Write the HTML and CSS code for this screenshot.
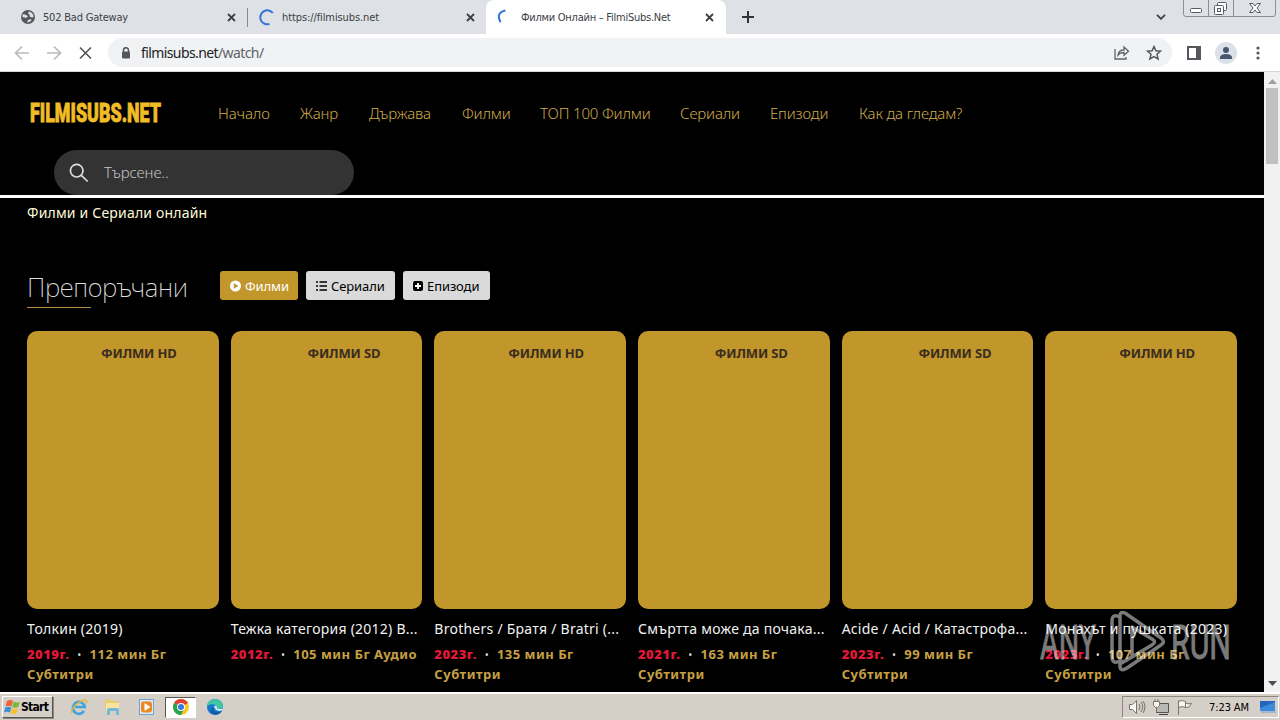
FILE: index.html
```html
<!DOCTYPE html>
<html lang="bg">
<head>
    <meta charset="UTF-8">
    <meta name="viewport" content="width=device-width, initial-scale=1.0">
    <title>Филми Онлайн – FilmiSubs.Net</title>
    <link rel="stylesheet" href="styles.css">
</head>
<body>
    <div class="tab-strip">
        <div class="tab tab-first">
            <svg class="favicon" width="14" height="14" viewBox="0 0 14 14"><circle cx="7" cy="7" r="7" fill="#54585d"/><path d="M1.500 4.500C4 3.500 5 5.500 7 6q-1 2.500-3.500 1.500L1.500 7zM8 1.500q-2 2 .5 3L9 7l3.500.5Q13 3 8 1.500zM6 12.500l1-2.500 3.500-1q0 3-4.500 3.500z" fill="#dee1e6"/></svg>
            <span class="tab-title title-gateway">502 Bad Gateway</span>
            <svg class="close" width="9" height="9" viewBox="0 0 9 9"><path d="M1 1l7 7M8 1L1 8"/></svg>
        </div>
        <div class="tab tab-second">
            <svg class="favicon" width="17" height="17" viewBox="0 0 17 17"><path d="M14.800 4A7 7 0 1 0 11.500 15" fill="none" stroke="#3472dc" stroke-width="2"/></svg>
            <span class="tab-title title-https">https://filmisubs.net</span>
            <svg class="close" width="9" height="9" viewBox="0 0 9 9"><path d="M1 1l7 7M8 1L1 8"/></svg>
        </div>
        <div class="tab tab-active">
            <svg class="favicon" width="17" height="17" viewBox="0 0 17 17"><path d="M10.500 1.500Q.5 3.500 5.500 13.200" fill="none" stroke="#3472dc" stroke-width="2"/></svg>
            <span class="tab-title title-filmi">Филми Онлайн – FilmiSubs.Net</span>
            <svg class="close" width="9" height="9" viewBox="0 0 9 9"><path d="M1 1l7 7M8 1L1 8"/></svg>
        </div>
        <svg class="new-tab" width="12" height="12" viewBox="0 0 12 12"><path d="M6 0v12M0 6h12" stroke="#2f3237" stroke-width="2"/></svg>
        <svg class="tab-search" width="10" height="6" viewBox="0 0 10 6"><path d="M1 .8l4 4 4-4" fill="none" stroke="#3c4043" stroke-width="1.800"/></svg>
        <svg class="window-buttons" width="94" height="18" viewBox="0 0 94 18">
            <path d="M.5 0v14q0 2.500 2.500 2.500h87q2.500 0 2.500-2.500V0M25.500 0v16M50.500 0v16" fill="none" stroke="#8b9098"/>
            <g fill="#fff" stroke="#555b65">
                <rect x="7.500" y="8.500" width="11" height="4" rx="1"/>
                <rect x="34.500" y="2.500" width="9" height="8" rx="1"/>
                <rect x="31.500" y="5.500" width="9" height="9" rx="1"/>
                <rect x="34.500" y="8.500" width="3" height="3"/>
                <path d="M66.500 3.500h3.500l2 2.500 2-2.500h3.500L74 8l3.500 4.500H74l-2-2.500-2 2.500h-3.500L70 8z"/>
            </g>
        </svg>
    </div>

    <div class="toolbar">
        <svg class="nav-icons" width="80" height="16" viewBox="0 0 80 16" fill="none" stroke-width="1.700">
            <path d="M15 8H2M8 1.500L1.500 8 8 14.500M33 8h13M40 1.500L46.500 8 40 14.500" stroke="#b9bbbe"/>
            <path d="M66 2.500L77 13.500M77 2.500L66 13.500" stroke="#54585d"/>
        </svg>
        <div class="address">
            <svg width="10" height="12" viewBox="0 0 10 12"><path d="M2.500 5V3.200a2.500 2.500 0 0 1 5 0V5" fill="none" stroke="#54585d" stroke-width="1.500"/><rect x="1" y="4.500" width="8" height="7" rx="1" fill="#54585d"/></svg>
            <span class="url">filmisubs.net<i>/watch/</i></span>
            <svg class="share" width="16" height="15" viewBox="0 0 16 15" fill="none" stroke="#5f6368" stroke-width="1.300"><path d="M1 4v10h11v-2M4 10c.5-4 2.500-5 6-5V2l4.500 4.300L10 10.300V7.500C7.500 7.500 5.500 8 4 10z"/></svg>
            <svg class="star" width="16" height="16" viewBox="0 0 16 16"><path d="M8 1.500l1.900 4.300 4.600.4L11 9.300l1.100 4.600L8 11.500l-4.100 2.400L5 9.300 1.500 6.200l4.600-.4z" fill="none" stroke="#54585d" stroke-width="1.500"/></svg>
        </div>
        <svg class="side-panel" width="14" height="14" viewBox="0 0 14 14"><path d="M1 1h12v12H1z" fill="#fff" stroke="#54585d" stroke-width="2"/><path d="M9 0h5v14H9z" fill="#54585d"/></svg>
        <svg class="profile" width="22" height="22" viewBox="0 0 22 22"><circle cx="11" cy="11" r="11" fill="#dce1e8"/><circle cx="11" cy="8" r="3" fill="#48566f"/><path d="M5 17v-2q1-3 6-3t6 3v2z" fill="#48566f"/></svg>
        <svg class="dots" width="4" height="14" viewBox="0 0 4 14" fill="#54585d"><circle cx="2" cy="2" r="1.600"/><circle cx="2" cy="7" r="1.600"/><circle cx="2" cy="12" r="1.600"/></svg>
    </div>

    <div class="viewport">
        <main>
            <header>
                <div class="menu-row">
                    <svg class="logo" width="134" height="36" viewBox="0 0 134 36"><text x="1" y="27" textLength="131" lengthAdjust="spacingAndGlyphs">FILMISUBS.NET</text></svg>
                    <nav>
                        <a>Начало</a>
                        <a>Жанр</a>
                        <a>Държава</a>
                        <a>Филми</a>
                        <a>ТОП 100 Филми</a>
                        <a>Сериали</a>
                        <a>Епизоди</a>
                        <a>Как да гледам?</a>
                    </nav>
                </div>
                <div class="search">
                    <svg width="20" height="20" viewBox="0 0 20 20" fill="none" stroke="#ddd" stroke-width="1.700"><circle cx="7.700" cy="7.700" r="6.300"/><path d="M12.300 12.300l6.500 6.200"/></svg>
                    <span>Търсене..</span>
                </div>
            </header>
            <p class="tagline">Филми и Сериали онлайн</p>
            <section class="heading">
                <h2>Препоръчани</h2>
                <div class="filters">
                    <a class="filter active"><svg width="12" height="12" viewBox="0 0 12 12"><circle cx="6.500" cy="6" r="5.500" fill="#fff"/><path d="M4.800 3.200v5.600L9.500 6z" fill="#c1962a"/></svg><span>Филми</span></a>
                    <a class="filter"><svg width="12" height="12" viewBox="0 0 12 12"><path d="M1 2h2M4.500 2H12M1 6h2M4.500 6H12M1 10h2M4.500 10H12" stroke="#000" stroke-width="1.700"/></svg><span>Сериали</span></a>
                    <a class="filter"><svg width="12" height="12" viewBox="0 0 12 12"><rect x="1" y="1" width="10" height="10" rx="2"/><path d="M6 3v6M3 6h6" stroke="#fff" stroke-width="1.800"/></svg><span>Епизоди</span></a>
                </div>
            </section>
            <section class="movies">
                <article>
                    <div class="poster"><span>ФИЛМИ HD</span></div>
                    <h3>Толкин (2019)</h3>
                    <p class="meta"><b>2019г.</b><i>•</i>112 мин Бг<br>Субтитри</p>
                </article>
                <article>
                    <div class="poster"><span>ФИЛМИ SD</span></div>
                    <h3>Тежка категория (2012) В...</h3>
                    <p class="meta"><b>2012г.</b><i>•</i>105 мин Бг Аудио</p>
                </article>
                <article>
                    <div class="poster"><span>ФИЛМИ HD</span></div>
                    <h3>Brothers / Братя / Bratri (...</h3>
                    <p class="meta"><b>2023г.</b><i>•</i>135 мин Бг<br>Субтитри</p>
                </article>
                <article>
                    <div class="poster"><span>ФИЛМИ SD</span></div>
                    <h3>Смъртта може да почака...</h3>
                    <p class="meta"><b>2021г.</b><i>•</i>163 мин Бг<br>Субтитри</p>
                </article>
                <article>
                    <div class="poster"><span>ФИЛМИ SD</span></div>
                    <h3>Acide / Acid / Катастрофа...</h3>
                    <p class="meta"><b>2023г.</b><i>•</i>99 мин Бг<br>Субтитри</p>
                </article>
                <article>
                    <div class="poster"><span>ФИЛМИ HD</span></div>
                    <h3>Монахът и пушката (2023)</h3>
                    <p class="meta"><b>2023г.</b><i>•</i>107 мин Бг<br>Субтитри</p>
                </article>
            </section>
        </main>
        <div class="scrollbar">
            <svg width="9" height="5" viewBox="0 0 9 5"><path d="M0 5l4.500-5L9 5z" fill="#a0a0a0"/></svg>
            <div class="thumb"></div>
            <svg class="down" width="9" height="5" viewBox="0 0 9 5"><path d="M0 0h9L4.500 5z" fill="#505050"/></svg>
        </div>
        <svg class="watermark" width="200" height="66" viewBox="0 0 200 66">
            <text x="2" y="51" textLength="56" lengthAdjust="spacingAndGlyphs">ANY</text>
            <path d="M82 9q-8-4-8 4v35q0 9 8 5M94 49l-7 4q-5 2-5-3V8q0-5 5-3l36 25q5 4 0 7L89 60q-6 4-7-1l0-3 32-19q5-3 0-6L94 19v30l8-5" fill="none" stroke="#fff" stroke-width="3.500" stroke-linejoin="round"/>
            <text x="133" y="51" textLength="60" lengthAdjust="spacingAndGlyphs">RUN</text>
        </svg>
    </div>

    <footer class="taskbar">
        <div class="start">
            <svg width="17" height="16" viewBox="0 0 17 16"><path d="M3 2q3-2 6 0L7.500 7.500q-3-1.500-6 0z" fill="#ed6436"/><path d="M9.800 2.500q3 1.700 6 .3L14.200 8q-3 1.600-6 0z" fill="#79b83a"/><path d="M1.300 8.600q3-1.700 6 0L5.900 13.500q-3-1.700-6 0z" fill="#3f8fd7"/><path d="M8 9q3 1.700 6 .2l-1.500 5q-3 1.700-6 0z" fill="#f7c12f"/></svg>
            <span>Start</span>
        </div>
        <div class="launchers">
            <svg width="18" height="18" viewBox="0 0 18 18"><path d="M14 13a6 6 0 1 1 .8-4H5" fill="none" stroke="#42a4dc" stroke-width="2.700"/><path d="M2 15C-.5 11 12 0 16.500 2.500q1 1-.5 3" fill="none" stroke="#e5b83c" stroke-width="1.400"/></svg>
            <svg width="18" height="18" viewBox="0 0 18 18"><path d="M1 2l5-1 1 2h8v9H1z" fill="#e9cb70"/><path d="M2 5h13v8H2z" fill="#f8e6a0"/><path d="M3 17v-5q0-2 2-2h8q2 0 2 2v5h-3v-4H6v4z" fill="#78b7d8"/></svg>
            <svg width="18" height="18" viewBox="0 0 18 18"><rect x="1.500" y="1.500" width="14" height="15" fill="#d9e8f4" stroke="#71a6d1"/><rect x="3" y="3.500" width="11" height="11" rx="3" fill="#ed861d"/><path d="M6.500 5v8l6-4z" fill="#fff"/></svg>
            <div class="running"><svg width="16" height="16" viewBox="0 0 16 16"><circle cx="8" cy="8" r="8" fill="#f8c827"/><path d="M8 8L1.100 4a8 8 0 0 1 13.800 0z" fill="#df4034"/><path d="M1.100 4A8 8 0 0 0 8 16l3-6-3-2z" fill="#27a251"/><circle cx="8" cy="8" r="4" fill="#fff"/><circle cx="8" cy="8" r="3" fill="#3679dc"/></svg></div>
            <svg width="18" height="18" viewBox="0 0 18 18"><circle cx="9" cy="9" r="8" fill="#1678ca"/><path d="M1 8C2-.5 15-1 17 7q.5 4-4 4-3 0-3-2c1-3-5-4-9-1z" fill="#42c5a4"/><path d="M7 9q-1 5 5 5 2 0 4-1.500Q13 18 7 16 2 13 7 9z" fill="#1559a2"/><path d="M8 8q4-1 2.500 2 2 2 6 .4l.3 1.600q-7 3-8.800-4z" fill="#d6eef5"/></svg>
        </div>
        <div class="tray">
            <svg width="66" height="18" viewBox="0 0 66 18" fill="#f7f7f4" stroke="#77736d">
                <path d="M1.500 6.500h3l4-4v13l-4-4h-3z"/><path d="M11 6q2 3 0 6M13 4q3.500 5 0 10M15 3q4 6 0 12" fill="none"/>
                <path d="M28.500 5.500h12v9h-12z" fill="#b8b8b4" stroke="#55534f"/><path d="M31 16.500h9" stroke="#45433f"/><path d="M25.500 3.500h6v4l-2 2h-2l-2-2zM27 1v3M30 1v3M28.500 9v5"/>
                <path d="M50.500 17V2.500M50.500 3.500q4-2 7 0v6q-3-2-7 0M57.500 5q2 1.500 6 .5-2 5-6 4"/>
            </svg>
            <span>7:23 AM</span>
            <svg class="desktop" width="16" height="14" viewBox="0 0 16 14"><path d="M0 1h15v10H0z" fill="#2466bb"/><path d="M0 8L15 2v9H0z" fill="#3e8bda"/><path d="M1 12h15" stroke="#9eb8d2" stroke-width="2"/></svg>
        </div>
    </footer>
</body>
</html>
```
FILE: styles.css
```css
* {
    box-sizing: border-box;
}
body {
    margin: 0;
    width: 1280px;
    height: 720px;
    overflow: hidden;
    display: flex;
    flex-direction: column;
    font-family: "Noto Sans", "Open Sans", sans-serif;
    white-space: nowrap;
}
svg {
    display: block;
    flex: none;
}
i {
    font-style: normal;
}

/* browser frame */
.tab-strip {
    height: 34px;
    flex: none;
    background: #dee1e6;
    display: flex;
    align-items: center;
}
.tab {
    height: 34px;
    display: flex;
    align-items: center;
    font: 11px "DejaVu Sans Condensed", "DejaVu Sans", sans-serif;
    font-stretch: condensed;
    color: #3c4043;
}
.tab-first {
    width: 247px;
    padding: 0 11px 0 21px;
}
.tab-second {
    width: 239px;
    padding: 0 11px;
    position: relative;
}
.tab-second::before {
    content: "";
    position: absolute;
    left: 0;
    top: 8px;
    width: 1px;
    height: 19px;
    background: #878b91;
}
.tab-active {
    width: 240px;
    padding: 0 12px 0 9px;
    background: #fff;
    border-radius: 8px 8px 0 0;
}
.tab-title {
    margin-left: 8px;
}
.title-gateway {
    letter-spacing: -0.2px;
}
.title-https {
    margin-left: 7px;
    letter-spacing: -0.1px;
}
.title-filmi {
    margin-left: 9px;
    letter-spacing: -0.25px;
}
.close {
    margin-left: auto;
    fill: none;
    stroke: #3c4043;
    stroke-width: 1.8;
}
.new-tab {
    margin-left: 16px;
}
.tab-search {
    margin-left: auto;
    margin-right: 17px;
}
.window-buttons {
    align-self: flex-start;
    margin-right: 3px;
}
.toolbar {
    height: 38px;
    flex: none;
    background: #fff;
    border-bottom: 1px solid #d5d7d9;
    display: flex;
    align-items: center;
    padding: 0 20px 0 14px;
}
.address {
    width: 1064px;
    height: 29px;
    margin-left: 14px;
    padding: 0 10px 0 13px;
    border-radius: 15px;
    background: #f0f2f4;
    display: flex;
    align-items: center;
}
.url {
    margin-left: 10px;
    font-size: 14px;
    letter-spacing: -0.6px;
    color: #202124;
}
.url i {
    color: #5f6368;
}
.share {
    margin-left: auto;
}
.star {
    margin-left: 16px;
}
.side-panel {
    margin-left: 15px;
}
.profile {
    margin-left: 14px;
}
.dots {
    margin-left: auto;
}

/* page */
.viewport {
    height: 620px;
    flex: none;
    display: flex;
    position: relative;
    background: #000;
}
main {
    width: 1264px;
}
header {
    height: 126px;
    border-bottom: 3px solid #fff;
}
.menu-row {
    display: flex;
    align-items: center;
    height: 78px;
    padding: 4px 0 0 29px;
}
.logo text {
    font: 900 26px Roboto, sans-serif;
    fill: #f1bd27;
    stroke: #f1bd27;
    stroke-width: 0.8;
}
nav {
    margin-left: 55px;
    display: grid;
    grid-template-columns: 52px 39px 63px 48px 110px 60px 59px 104px;
    gap: 30px;
    font-size: 15px;
    font-weight: 300;
    letter-spacing: -0.15px;
    color: #d3ad4c;
}
.search {
    width: 300px;
    height: 45px;
    margin-left: 54px;
    padding-left: 15px;
    border-radius: 23px;
    background: #333;
    display: flex;
    align-items: center;
    color: #c5c5c5;
    font-size: 15px;
    font-weight: 300;
}
.search span {
    margin-left: 15px;
    padding-bottom: 2px;
    letter-spacing: -0.1px;
}
.tagline {
    height: 30px;
    margin: 0 0 0 27px;
    line-height: 30px;
    font-size: 14px;
    letter-spacing: 0.19px;
    color: #fffbd9;
}
.heading {
    height: 103px;
    padding: 43px 0 0 27px;
    display: flex;
}
h2 {
    width: 193px;
    height: 37px;
    margin: 0;
    line-height: 32px;
    font-size: 26px;
    font-weight: 200;
    letter-spacing: -0.35px;
    color: #ddd;
}
h2::after {
    content: "";
    display: block;
    width: 64px;
    height: 1px;
    margin-top: 4px;
    background: #b38a48;
}
.filters {
    display: flex;
    gap: 8px;
}
.filter {
    width: 89px;
    height: 29px;
    padding-left: 9px;
    border-radius: 3px;
    background: #dadada;
    display: flex;
    align-items: center;
    gap: 4px;
    font-size: 13px;
    letter-spacing: -0.1px;
    color: #000;
}
.filter.active {
    width: 78px;
    background: #c1962a;
    color: #fff;
}
.filter:last-child {
    width: 87px;
    gap: 3px;
}
.movies {
    display: grid;
    grid-template-columns: repeat(6, 1fr);
    gap: 12px;
    width: 1210px;
    margin-left: 27px;
}
article {
    min-width: 0;
}
.poster {
    height: 278px;
    border-radius: 10px;
    background: #c1962a;
    padding: 13px 42px 0 0;
    text-align: right;
    font-size: 13px;
    font-weight: 700;
    line-height: 18px;
    letter-spacing: -0.15px;
    color: #392d20;
}
h3 {
    margin: 9px 0 0;
    line-height: 22px;
    font-size: 14px;
    font-weight: 400;
    letter-spacing: 0.25px;
    color: #f2f2f2;
}
.meta {
    margin: 4px 0 0;
    line-height: 20px;
    font-size: 13px;
    font-weight: 700;
    letter-spacing: 0.5px;
    color: #c7a044;
}
.meta b {
    color: #e01837;
}
.meta i {
    display: inline-block;
    width: 20px;
    line-height: 10px;
    text-align: center;
    font-size: 8px;
    color: #ddd;
    vertical-align: 1px;
}
.scrollbar {
    width: 16px;
    background: #f1f1f1;
    display: flex;
    flex-direction: column;
    align-items: center;
    padding: 7px 0 6px;
}
.thumb {
    width: 12px;
    height: 76px;
    margin-top: 4px;
    background: #c1c1c1;
}
.down {
    margin-top: auto;
}
.watermark {
    position: absolute;
    left: 1038px;
    top: 536px;
    opacity: 0.48;
}
.watermark text {
    font: 48px Roboto, sans-serif;
    fill: #fff;
    stroke: #fff;
    stroke-width: 0.8;
}

/* windows taskbar */
.taskbar {
    height: 28px;
    flex: none;
    border-top: 2px solid #fff;
    background: #d5cfc7;
    display: flex;
    align-items: center;
    padding: 0 1px 0 2px;
    font: 11px "DejaVu Sans Condensed", "DejaVu Sans", sans-serif;
    font-stretch: condensed;
}
.start {
    width: 51px;
    height: 22px;
    border: 1px solid;
    border-color: #fff #555 #555 #fff;
    box-shadow: 1px 1px #8b8781;
    display: flex;
    align-items: center;
    font-size: 12px;
    font-weight: bold;
    letter-spacing: -0.7px;
    padding-left: 1px;
}
.launchers {
    margin-left: 17px;
    display: flex;
    align-items: center;
    gap: 16px;
}
.running {
    width: 31px;
    height: 21px;
    margin: 0 -6px 0 -7px;
    background: #fff;
    border: 1px solid;
    border-color: #555 #fff #fff #555;
    display: flex;
    align-items: center;
    justify-content: center;
}
.tray {
    width: 157px;
    height: 22px;
    margin-left: auto;
    border: 1px solid;
    border-color: #8d8982 #fff #fff #8d8982;
    display: flex;
    align-items: center;
    padding-left: 5px;
}
.tray span {
    margin-left: 15px;
    letter-spacing: -0.1px;
}
.desktop {
    margin-left: auto;
    margin-right: 2px;
}
```
